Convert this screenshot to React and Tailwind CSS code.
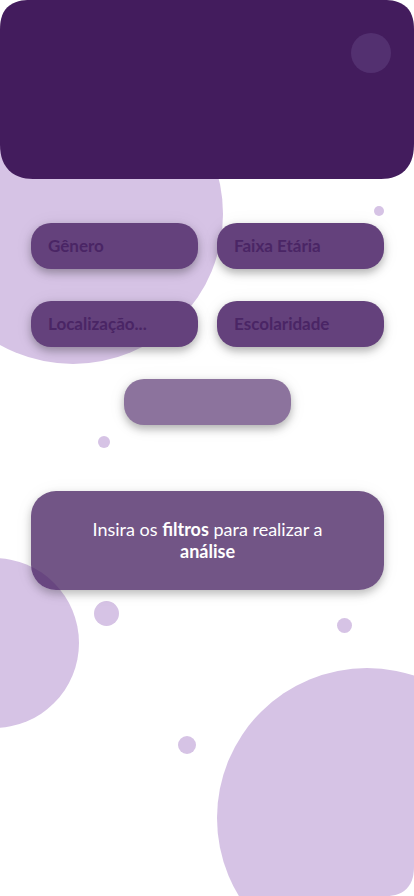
const filters = [
  { id: 'genero', label: 'Gênero' },
  { id: 'faixa-etaria', label: 'Faixa Etária' },
  { id: 'localizacao', label: 'Localização...' },
  { id: 'escolaridade', label: 'Escolaridade' },
];

const bubbles = [
  'left-[-77px] top-[64px] size-[300px]',
  'left-[-91px] top-[558px] size-[170px]',
  'left-[217px] top-[668px] size-[300px]',
  'left-[374px] top-[206px] size-[10px]',
  'left-[98px] top-[436px] size-[12px]',
  'left-[94px] top-[601px] size-[25px]',
  'left-[337px] top-[618px] size-[15px]',
  'left-[178px] top-[736px] size-[18px]',
];

function Bubbles() {
  return (
    <div aria-hidden="true" className="absolute inset-0">
      {bubbles.map((place) => (
        <span key={place} className={`absolute rounded-full bg-[#d6c3e5] ${place}`} />
      ))}
    </div>
  );
}

function FilterSelect({ id, label }) {
  return (
    <select
      id={id}
      aria-label={label}
      defaultValue=""
      className="h-[46px] w-full cursor-pointer appearance-none rounded-[20px] bg-[#64417c] px-[17px] text-[17px] font-bold text-[#4a2565] shadow-[0_4px_8px_rgba(0,0,0,0.28),0_2px_20px_rgba(0,0,0,0.06)]"
    >
      <option value="">{label}</option>
    </select>
  );
}

export default function App() {
  return (
    <div className="relative min-h-screen overflow-hidden rounded-[30px] bg-white font-['Lato',sans-serif] [corner-shape:superellipse(1.3)]">
      <Bubbles />
      <header className="relative flex h-[179px] items-start justify-end rounded-b-[36px] bg-[#431c5d] px-[23px] py-[33px] [corner-shape:superellipse(1.3)]">
        <button type="button" aria-label="Menu" className="size-10 rounded-full bg-[#533070]" />
      </header>
      <main className="relative flex flex-col items-center pt-11 pr-[30px] pl-[31px]">
        <form className="flex w-full flex-col items-center gap-8">
          <div className="grid w-full grid-cols-2 gap-x-[19px] gap-y-8">
            {filters.map((filter) => (
              <FilterSelect key={filter.id} {...filter} />
            ))}
          </div>
          <button
            type="button"
            aria-label="Filtrar"
            className="h-[46px] w-[167px] rounded-[20px] bg-[#8c739d] shadow-[0_4px_8px_rgba(0,0,0,0.28),0_2px_20px_rgba(0,0,0,0.06)]"
          />
        </form>
        <section className="mt-[66px] w-full rounded-[25px] bg-[#431c5d]/75 px-12 pt-[27px] pb-7 text-center text-[18px] leading-[22px] text-white shadow-[0_4px_8px_rgba(0,0,0,0.24),0_2px_20px_rgba(0,0,0,0.05)]">
          <p>
            Insira os <strong className="font-bold">filtros</strong> para realizar a{' '}
            <strong className="font-bold">análise</strong>
          </p>
        </section>
      </main>
    </div>
  );
}
